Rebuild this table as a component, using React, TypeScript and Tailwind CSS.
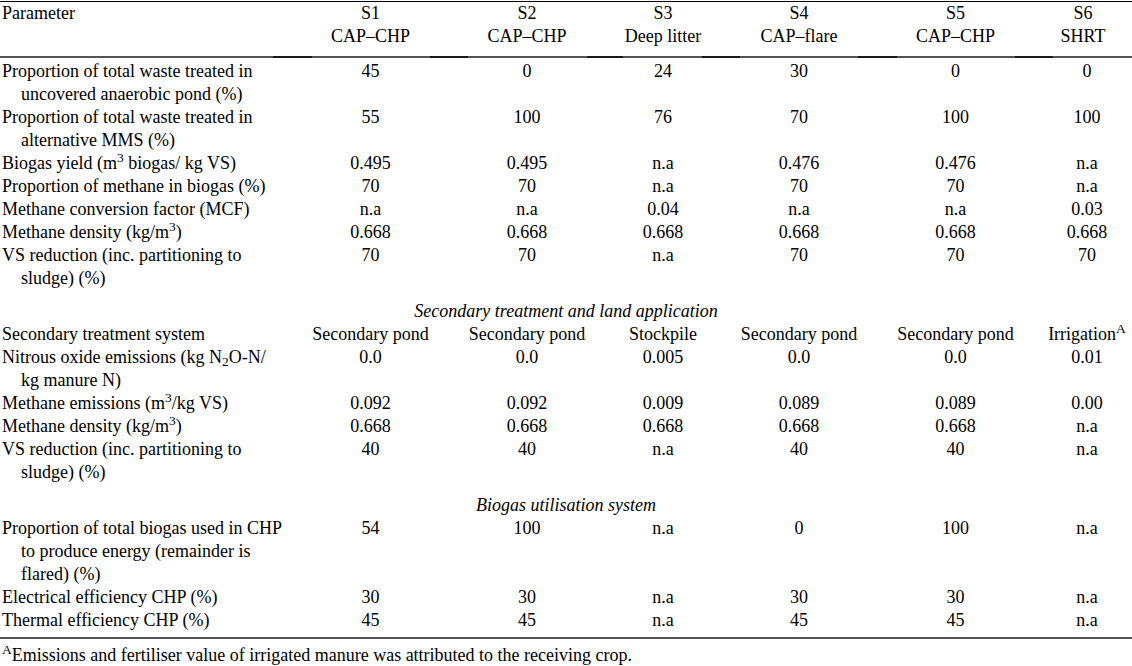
import React from "react";

type Cell = React.ReactNode;
type Row = { label: Cell[]; values: Cell[] };

const M3 = (
  <>
    m<sup>3</sup>
  </>
);

const block1: Row[] = [
  {
    label: ["Proportion of total waste treated in", "uncovered anaerobic pond (%)"],
    values: ["45", "0", "24", "30", "0", "0"],
  },
  {
    label: ["Proportion of total waste treated in", "alternative MMS (%)"],
    values: ["55", "100", "76", "70", "100", "100"],
  },
  {
    label: [<>Biogas yield ({M3} biogas/ kg VS)</>],
    values: ["0.495", "0.495", "n.a", "0.476", "0.476", "n.a"],
  },
  {
    label: ["Proportion of methane in biogas (%)"],
    values: ["70", "70", "n.a", "70", "70", "n.a"],
  },
  {
    label: ["Methane conversion factor (MCF)"],
    values: ["n.a", "n.a", "0.04", "n.a", "n.a", "0.03"],
  },
  {
    label: [<>Methane density (kg/{M3})</>],
    values: ["0.668", "0.668", "0.668", "0.668", "0.668", "0.668"],
  },
  {
    label: ["VS reduction (inc. partitioning to", "sludge) (%)"],
    values: ["70", "70", "n.a", "70", "70", "70"],
  },
];

const block2: Row[] = [
  {
    label: ["Secondary treatment system"],
    values: [
      "Secondary pond",
      "Secondary pond",
      "Stockpile",
      "Secondary pond",
      "Secondary pond",
      <>
        Irrigation<sup>A</sup>
      </>,
    ],
  },
  {
    label: [
      <>
        Nitrous oxide emissions (kg N<sub>2</sub>O-N/
      </>,
      "kg manure N)",
    ],
    values: ["0.0", "0.0", "0.005", "0.0", "0.0", "0.01"],
  },
  {
    label: [<>Methane emissions ({M3}/kg VS)</>],
    values: ["0.092", "0.092", "0.009", "0.089", "0.089", "0.00"],
  },
  {
    label: [<>Methane density (kg/{M3})</>],
    values: ["0.668", "0.668", "0.668", "0.668", "0.668", "n.a"],
  },
  {
    label: ["VS reduction (inc. partitioning to", "sludge) (%)"],
    values: ["40", "40", "n.a", "40", "40", "n.a"],
  },
];

const block3: Row[] = [
  {
    label: [
      "Proportion of total biogas used in CHP",
      "to produce energy (remainder is",
      "flared) (%)",
    ],
    values: ["54", "100", "n.a", "0", "100", "n.a"],
  },
  {
    label: ["Electrical efficiency CHP (%)"],
    values: ["30", "30", "n.a", "30", "30", "n.a"],
  },
  {
    label: ["Thermal efficiency CHP (%)"],
    values: ["45", "45", "n.a", "45", "45", "n.a"],
  },
];

const GRID = "grid grid-cols-[292px_157px_156px_116px_156px_157px_98px]";

function DataRow({ row }: { row: Row }) {
  return (
    <div className={GRID}>
      <div className="pl-[2px]">
        {row.label.map((l, i) => (
          <div key={i} className={i > 0 ? "pl-[19px] whitespace-nowrap" : "whitespace-nowrap"}>
            {l}
          </div>
        ))}
      </div>
      {row.values.map((v, i) => (
        <div key={i} className={i === 5 ? "text-center whitespace-nowrap pl-[8px]" : "text-center whitespace-nowrap"}>
          {v}
        </div>
      ))}
    </div>
  );
}

function Section({ title }: { title: string }) {
  return <div className="text-center italic pt-[10px]">{title}</div>;
}

function HeaderRule() {
  const segs: [string, string][] = [
    ["w-[273px]", "bg-[#555]"],
    ["w-[39px]", "bg-[#1a1a1a]"],
    ["w-[118px]", "bg-[#555]"],
    ["w-[38px]", "bg-[#1a1a1a]"],
    ["w-[119px]", "bg-[#555]"],
    ["w-[36px]", "bg-[#1a1a1a]"],
    ["w-[79px]", "bg-[#555]"],
    ["w-[38px]", "bg-[#1a1a1a]"],
    ["w-[118px]", "bg-[#555]"],
    ["w-[39px]", "bg-[#1a1a1a]"],
    ["w-[118px]", "bg-[#555]"],
    ["w-[38px]", "bg-[#1a1a1a]"],
    ["flex-1", "bg-[#555]"],
  ];
  return (
    <div className="flex h-[2px]">
      {segs.map(([w, c], i) => (
        <div key={i} className={`${w} ${c} h-full`} />
      ))}
    </div>
  );
}

export default function App() {
  const heads: [string, string][] = [
    ["S1", "CAP–CHP"],
    ["S2", "CAP–CHP"],
    ["S3", "Deep litter"],
    ["S4", "CAP–flare"],
    ["S5", "CAP–CHP"],
    ["S6", "SHRT"],
  ];
  return (
    <div className="w-[1132px] h-[666px] bg-white text-black font-['Liberation_Serif','Times_New_Roman',serif] text-[18px] leading-[23px] pt-[1px]">
      <div className="border-t border-black">
        <div className={`${GRID} pb-[8px]`}>
          <div className="pl-[2px]">Parameter</div>
          {heads.map(([a, b]) => (
            <div key={a} className="text-center whitespace-nowrap">
              <div>{a}</div>
              <div>{b}</div>
            </div>
          ))}
        </div>
        <HeaderRule />
        <div className="pt-[2px]">
          {block1.map((r, i) => (
            <DataRow key={i} row={r} />
          ))}
        </div>
        <Section title="Secondary treatment and land application" />
        {block2.map((r, i) => (
          <DataRow key={i} row={r} />
        ))}
        <Section title="Biogas utilisation system" />
        <div className="pb-[5px] border-b-2 border-[#555]">
          {block3.map((r, i) => (
            <DataRow key={i} row={r} />
          ))}
        </div>
        <div className="pt-[5px] pl-[2px]">
          <sup>A</sup>Emissions and fertiliser value of irrigated manure was attributed to the receiving crop.
        </div>
      </div>
    </div>
  );
}
